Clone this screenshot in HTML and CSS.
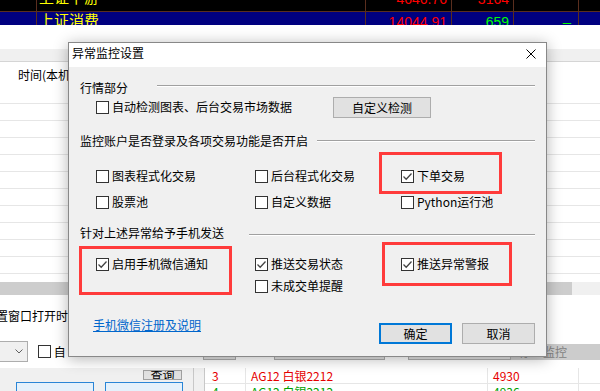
FILE: index.html
```html
<!DOCTYPE html>
<html>
<head>
    <meta charset="utf-8">
    <title>异常监控设置</title>
    <link rel="stylesheet" href="styles.css">
</head>
<body>
    <div class="quote">
        <div class="quote-row">
            <span class="qc qc-gap"></span>
            <span class="qc qc-name">上证下游</span>
            <span class="qc qc-num qc-price red">4646.76</span>
            <span class="qc qc-num qc-chg red">3164</span>
            <span class="qc qc-num qc-pct"></span>
            <span class="qc qc-end"></span>
        </div>
        <div class="quote-row quote-row-sel">
            <span class="qc qc-gap"></span>
            <span class="qc qc-name">上证消费</span>
            <span class="qc qc-num qc-price red">14044.91</span>
            <span class="qc qc-num qc-chg green">659</span>
            <span class="qc qc-num qc-pct green">–</span>
            <span class="qc qc-end"></span>
        </div>
    </div>

    <div class="top-space"></div>
    <div class="tabbar"></div>
    <div class="grid">
        <div class="grid-head">时间(本机</div>
        <div class="grid-row"></div>
        <div class="grid-row"></div>
        <div class="grid-row"></div>
        <div class="grid-row"></div>
        <div class="grid-row"></div>
        <div class="grid-row"></div>
        <div class="grid-row"></div>
        <div class="grid-row"></div>
        <div class="grid-row"></div>
        <div class="grid-row"></div>
        <div class="grid-foot"></div>
    </div>
    <div class="hscroll"><div class="hscroll-thumb"></div></div>

    <div class="opt-panel">
        <div class="opt-text">置窗口打开时</div>
        <div class="opt-line">
            <div class="combo">
                <svg width="8" height="5" viewBox="0 0 8 5"><path d="M0.5 0.5 L4 4 L7.5 0.5" fill="none" stroke="#606060" stroke-width="1"/></svg>
            </div>
            <label class="chk opt-chk"><span class="box"></span>自</label>
            <span class="opt-btn opt-btn-1"></span>
            <span class="opt-btn opt-btn-2"></span>
            <span class="opt-btn opt-btn-3"></span>
            <span class="opt-btn opt-btn-off">停止监控</span>
        </div>
    </div>

    <div class="bottom">
        <div class="left-pane">
            <div class="mini-btn">查询</div>
            <div class="tiles">
                <div class="tile"></div>
                <div class="tile"></div>
            </div>
        </div>
        <div class="splitter"></div>
        <div class="orders">
            <div class="order-row red-text">
                <span class="oc oc-no">3</span>
                <span class="oc oc-name">AG12 白银2212</span>
                <span class="oc oc-price">4930</span>
                <span class="oc oc-end"></span>
            </div>
            <div class="order-row green-text">
                <span class="oc oc-no">4</span>
                <span class="oc oc-name">AG12 白银2212</span>
                <span class="oc oc-price">4936</span>
                <span class="oc oc-end"></span>
            </div>
        </div>
    </div>

    <div class="dialog">
        <div class="titlebar">
            <span class="title">异常监控设置</span>
            <svg class="close" width="10" height="10" viewBox="0 0 10 10">
                <path d="M0.5 0.5 L9.5 9.5 M9.5 0.5 L0.5 9.5" stroke="#000" stroke-width="1"/>
            </svg>
        </div>
        <div class="dialog-body">
            <div class="group-head">
                <span>行情部分</span>
                <span class="sep sep-1"></span>
            </div>
            <div class="opt-row opt-row-first">
                <label class="chk"><span class="box"></span>自动检测图表、后台交易市场数据</label>
                <button class="btn btn-wide">自定义检测</button>
            </div>

            <div class="group-head head-2">
                <span>监控账户是否登录及各项交易功能是否开启</span>
                <span class="sep sep-2"></span>
            </div>
            <div class="opt-row row-2a">
                <label class="chk"><span class="box"></span>图表程式化交易</label>
                <label class="chk"><span class="box"></span>后台程式化交易</label>
                <label class="chk"><span class="box"><svg width="11" height="11" viewBox="0 0 11 11"><path d="M1.5 5.5 L4.2 8.2 L9.5 2.5" fill="none" stroke="#444" stroke-width="1.3"/></svg></span>下单交易</label>
            </div>
            <div class="opt-row row-2b">
                <label class="chk"><span class="box"></span>股票池</label>
                <label class="chk"><span class="box"></span>自定义数据</label>
                <label class="chk"><span class="box"></span>Python运行池</label>
            </div>

            <div class="group-head head-3">
                <span>针对上述异常给予手机发送</span>
                <span class="sep sep-3"></span>
            </div>
            <div class="opt-row row-3a">
                <label class="chk"><span class="box"><svg width="11" height="11" viewBox="0 0 11 11"><path d="M1.5 5.5 L4.2 8.2 L9.5 2.5" fill="none" stroke="#444" stroke-width="1.3"/></svg></span>启用手机微信通知</label>
                <label class="chk"><span class="box"><svg width="11" height="11" viewBox="0 0 11 11"><path d="M1.5 5.5 L4.2 8.2 L9.5 2.5" fill="none" stroke="#444" stroke-width="1.3"/></svg></span>推送交易状态</label>
                <label class="chk"><span class="box"><svg width="11" height="11" viewBox="0 0 11 11"><path d="M1.5 5.5 L4.2 8.2 L9.5 2.5" fill="none" stroke="#444" stroke-width="1.3"/></svg></span>推送异常警报</label>
            </div>
            <div class="opt-row row-3b">
                <span></span>
                <label class="chk"><span class="box"></span>未成交单提醒</label>
            </div>

            <div class="dialog-foot">
                <a class="help-link" href="#">手机微信注册及说明</a>
                <div class="foot-btns">
                    <button class="btn btn-default">确定</button>
                    <button class="btn">取消</button>
                </div>
            </div>
        </div>

        <div class="mark mark-1"></div>
        <div class="mark mark-2"></div>
        <div class="mark mark-3"></div>
    </div>
</body>
</html>
```

FILE: styles.css
```css
body {
    margin: 0;
    width: 600px;
    height: 391px;
    overflow: hidden;
    position: relative;
    background: #f0f0f0;
    font-family: "Noto Sans CJK SC", "Microsoft YaHei", sans-serif;
    font-size: 12px;
    color: #000;
}

/* quote board behind the dialog */
.quote {
    height: 25px;
    background: #000;
    overflow: hidden;
}
.quote-row {
    display: flex;
    height: 23px;
    border-bottom: 1px solid #5a2e1e;
    box-sizing: border-box;
}
.quote-row:first-child {
    margin-top: -11px;
}
.quote-row-sel {
    background: #000080;
}
.qc {
    flex: none;
    box-sizing: border-box;
    border-right: 1px solid #5a2e1e;
    overflow: hidden;
    white-space: nowrap;
}
.qc-gap { width: 37px; }
.qc-name {
    width: 329px;
    padding-left: 2px;
    color: #ffff00;
    font-size: 15px;
    line-height: 16px;
}
.qc-num {
    font-family: "Liberation Sans", Arial, sans-serif;
    font-size: 14px;
    line-height: 20px;
    text-align: right;
}
.qc-price { width: 86px; padding-right: 4px; }
.qc-chg { width: 62px; padding-right: 4px; }
.qc-pct { width: 65px; padding-right: 7px; font-size: 15px; }
.qc-end { flex: 1; border-right: none; }
.red { color: #ff0000; }
.green { color: #00ff00; }

/* main window */
.top-space {
    height: 24px;
    background: #fff;
}
.tabbar {
    height: 13px;
    background: #f0f0f0;
    border-bottom: 1px solid #d5d5d5;
    box-sizing: border-box;
}
.grid {
    background: #fff;
}
.grid-head {
    height: 42px;
    box-sizing: border-box;
    padding: 5px 0 0 18px;
    line-height: 16px;
    border-bottom: 1px solid #e6e6e6;
    white-space: nowrap;
}
.grid-row {
    height: 17px;
    box-sizing: border-box;
    border-bottom: 1px solid #e6e6e6;
}
.grid-foot {
    height: 8px;
}
.hscroll {
    display: flex;
    height: 13px;
    background: #f0f0f0;
}
.hscroll-thumb {
    width: 572px;
    background: #cdcdcd;
}

.opt-panel {
    height: 73px;
    background: #fff;
    padding-top: 13px;
    box-sizing: border-box;
    overflow: hidden;
}
.opt-text {
    margin-left: -4px;
    line-height: 16px;
    white-space: nowrap;
}
.opt-line {
    display: flex;
    align-items: center;
    height: 21px;
    margin-top: 17px;
}
.combo {
    width: 28px;
    height: 21px;
    box-sizing: border-box;
    border: 1px solid #adadad;
    border-left: none;
    background: #f0f0f0;
    display: flex;
    align-items: center;
    padding-left: 15px;
}
.opt-chk {
    width: 167px;
    margin-left: 10px;
}
.opt-btn {
    height: 16px;
    box-sizing: border-box;
    border: 1px solid #adadad;
    background: #e1e1e1;
    line-height: 14px;
    text-align: center;
    overflow: hidden;
}
.opt-btn-1 { width: 33px; }
.opt-btn-2 { width: 113px; margin-left: 38px; }
.opt-btn-3 { width: 104px; margin-left: 23px; }
.opt-btn-off {
    width: 90px;
    border-color: #cccccc;
    background: #cccccc;
    color: #838383;
    text-align: left;
    padding-left: 7px;
}

.bottom {
    display: flex;
    height: 23px;
}
.left-pane {
    width: 193px;
    background: #f0f0f0;
    padding-top: 2px;
    box-sizing: border-box;
}
.mini-btn {
    width: 39px;
    height: 10px;
    margin-left: 143px;
    box-sizing: border-box;
    border: 1px solid #a0a0a0;
    background: #e1e1e1;
    line-height: 8px;
    font-size: 12px;
    text-align: center;
    overflow: hidden;
}
.tiles {
    display: flex;
    gap: 11px;
    margin: 2px 0 0 16px;
}
.tile {
    width: 78px;
    height: 12px;
    box-sizing: border-box;
    border: 1px solid #2a85d6;
    border-bottom: none;
    background: #e5f1fb;
}
.splitter {
    width: 12px;
    box-sizing: border-box;
    border-left: 1px solid #c8c8c8;
    border-right: 1px solid #c8c8c8;
    background: #f0f0f0;
}
.orders {
    flex: 1;
    background: #fff;
}
.order-row {
    display: flex;
    height: 16px;
    box-sizing: border-box;
    border-bottom: 1px solid #e6e6e6;
    line-height: 15px;
}
.oc {
    flex: none;
    box-sizing: border-box;
    border-right: 1px solid #e6e6e6;
    white-space: nowrap;
    overflow: hidden;
}
.oc-no { width: 41px; padding-left: 7px; }
.oc-name { width: 242px; padding-left: 5px; }
.oc-price { width: 91px; padding-left: 5px; }
.oc-end { flex: 1; border-right: none; }
.red-text { color: #e60000; }
.green-text { color: #00a000; }

/* dialog */
.dialog {
    position: absolute;
    left: 68px;
    top: 42px;
    width: 479px;
    height: 315px;
    box-sizing: border-box;
    border: 1px solid #888;
    background: #f0f0f0;
    box-shadow: 0 2px 14px rgba(0, 0, 0, 0.3);
}
.titlebar {
    display: flex;
    justify-content: space-between;
    height: 24px;
    background: #fff;
    padding: 0 10px 0 3px;
}
.title {
    line-height: 20px;
    white-space: nowrap;
}
.close {
    margin-top: 6px;
}
.dialog-body {
    padding: 13px 11px 0 11px;
}
.group-head {
    display: flex;
    height: 16px;
    line-height: 16px;
    white-space: nowrap;
}
.head-2 { margin-top: 15px; }
.head-3 { margin-top: 12px; }
.sep {
    flex: 1;
    height: 0;
    border-top: 1px solid #a0a0a0;
    border-bottom: 1px solid #fff;
}
.sep-1 { margin: 5px 0 0 29px; }
.sep-2 { margin: 7px 0 0 9px; }
.sep-3 { margin: 9px 0 0 25px; }

.opt-row {
    display: grid;
    grid-template-columns: 159px 146px 1fr;
    align-items: center;
    height: 22px;
    padding-left: 16px;
}
.opt-row-first {
    grid-template-columns: 237px auto;
}
.row-2a { margin-top: 16px; }
.row-2b { margin-top: 4px; }
.row-3a { margin-top: 12px; }

.chk {
    display: flex;
    align-items: center;
    white-space: nowrap;
    line-height: 16px;
}
.box {
    flex: none;
    width: 13px;
    height: 13px;
    box-sizing: border-box;
    border: 1px solid #333;
    background: #fff;
    margin-right: 3px;
    display: flex;
    align-items: center;
    justify-content: center;
}

.btn {
    font-family: inherit;
    font-size: 12px;
    width: 73px;
    height: 21px;
    padding: 0;
    box-sizing: border-box;
    border: 1px solid #adadad;
    background: #e1e1e1;
    color: #000;
    line-height: 17px;
}
.btn-wide {
    width: 98px;
}
.btn-default {
    border: 2px solid #0078d7;
}
.dialog-foot {
    display: flex;
    margin-top: 20px;
}
.help-link {
    margin-left: 13px;
    line-height: 16px;
    color: #0066cc;
    text-decoration: underline;
    white-space: nowrap;
}
.foot-btns {
    display: flex;
    gap: 10px;
    margin: 6px 0 0 auto;
}

/* red annotation boxes */
.mark {
    position: absolute;
    box-sizing: border-box;
    border: 3px solid #ff3b3b;
}
.mark-1 { left: 310px; top: 109px; width: 123px; height: 42px; }
.mark-2 { left: 10px; top: 203px; width: 153px; height: 49px; }
.mark-3 { left: 313px; top: 199px; width: 130px; height: 44px; }
```
